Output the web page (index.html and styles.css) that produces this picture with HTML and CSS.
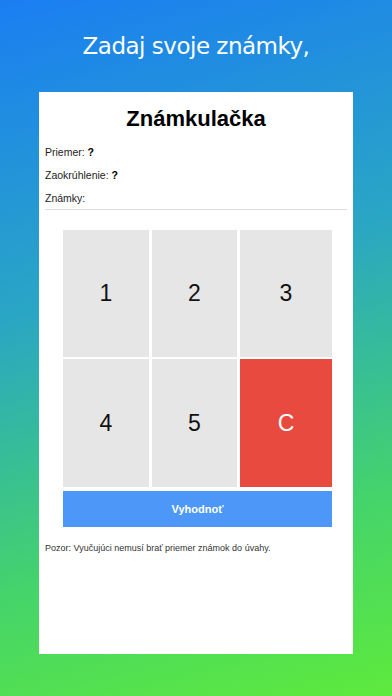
FILE: index.html
```html
<!DOCTYPE html>
<html lang="sk">
<head>
<meta charset="utf-8">
<link rel="stylesheet" href="styles.css">
</head>
<body>
<div class="screen">
  <h1 class="hero">Zadaj svoje známky,</h1>
  <div class="card">
    <h2 class="app-title">Známkulačka</h2>
    <div class="info">
      <div class="row">Priemer: <b>?</b></div>
      <div class="row">Zaokrúhlenie: <b>?</b></div>
      <div class="row grades">Známky:</div>
    </div>
    <div class="pad">
      <div class="keys">
        <div class="key">1</div>
        <div class="key">2</div>
        <div class="key">3</div>
        <div class="key">4</div>
        <div class="key">5</div>
        <div class="key clear">C</div>
      </div>
      <div class="eval">Vyhodnoť</div>
    </div>
    <p class="note">Pozor: Vyučujúci nemusí brať priemer známok do úvahy.</p>
  </div>
</div>
</body>
</html>
```
FILE: styles.css
```css
html, body {
  margin: 0;
  padding: 0;
}
body {
  width: 392px;
  height: 696px;
  overflow: hidden;
}
.screen {
  width: 392px;
  height: 696px;
  background: linear-gradient(165deg, #1a7ef2 0%, #2aa6c4 40%, #45d46a 75%, #5eea3c 100%);
  display: flex;
  flex-direction: column;
  align-items: center;
  box-sizing: border-box;
  padding-top: 30px;
}
.hero {
  margin: 0;
  height: 62px;
  font-family: "DejaVu Sans", Verdana, sans-serif;
  font-weight: normal;
  font-size: 23px;
  letter-spacing: -0.5px;
  line-height: 32px;
  color: #fff;
  text-align: center;
}
.card {
  width: 314px;
  height: 562px;
  background: #fff;
  box-sizing: border-box;
  padding: 0 6px;
  font-family: "Liberation Sans", Arial, sans-serif;
  color: #222;
}
.app-title {
  margin: 0;
  padding-top: 13px;
  height: 27px;
  font-size: 22px;
  line-height: 27px;
  font-weight: bold;
  text-align: center;
  color: #000;
}
.info {
  margin-top: 14px;
  font-size: 10.5px;
  border-bottom: 1.5px solid #ddd;
}
.row {
  height: 23px;
  line-height: 12px;
}
.row b {
  color: #000;
}
.grades {
  height: 17px;
}
.pad {
  margin: 20px 0 0 18px;
  width: 269px;
}
.keys {
  display: grid;
  grid-template-columns: 86px 85px 92px;
  grid-template-rows: 127px 128px;
  column-gap: 3px;
  row-gap: 2px;
}
.key {
  background: #e6e6e6;
  display: flex;
  align-items: center;
  justify-content: center;
  font-size: 23px;
  color: #111;
}
.key.clear {
  background: #e84a3f;
  color: #fff;
}
.eval {
  margin-top: 4px;
  height: 36px;
  background: #4d97f8;
  color: #fff;
  font-weight: bold;
  font-size: 11px;
  display: flex;
  align-items: center;
  justify-content: center;
}
.note {
  margin: 16px 0 0;
  font-size: 9px;
  color: #333;
}
```
